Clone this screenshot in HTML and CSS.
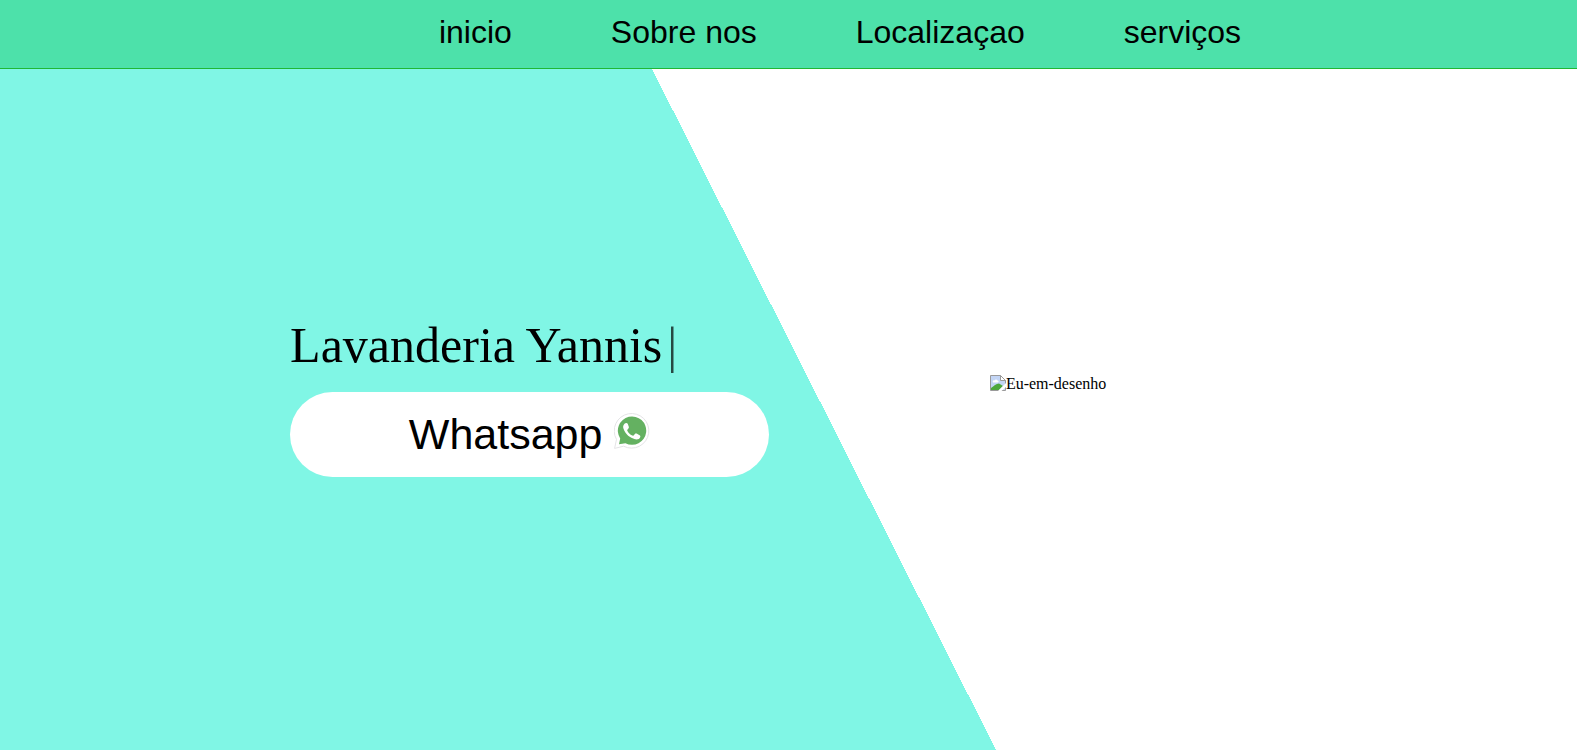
FILE: index.html
```html
<!DOCTYPE html>
<html lang="pt-BR">
<head>
<meta charset="utf-8">
<title>Lavanderia Yannis</title>
<link rel="stylesheet" href="styles.css">
</head>
<body>
<header class="header">
  <nav>
    <ul class="menu">
      <li><a href="#inicio">inicio</a></li>
      <li><a href="#sobre">Sobre nos</a></li>
      <li><a href="#localizacao">Localizaçao</a></li>
      <li><a href="#servicos">serviços</a></li>
    </ul>
  </nav>
</header>
<main class="hero" id="inicio">
  <div class="intro">
    <h1 class="title">Lavanderia Yannis<span class="cursor">|</span></h1>
    <button class="whatsapp" type="button">Whatsapp <svg class="whatsapp-icon" viewBox="0 0 36 36" aria-hidden="true">
      <path d="M.6 35.400 2.500 26.400A17.300 17.300 0 1 1 9.600 33.200z" fill="#fff" stroke="#e4e4e6" stroke-width="1"/>
      <path d="M5 31.200 6.200 25.500A14.200 14.200 0 1 1 11.400 30.200z" fill="#64b161"/>
      <path d="M10.500 10.700c-1.500 1.400-1.700 3.300-.9 5.400 2.100 5.400 6.300 8.900 11.500 10.200 2.400.5 4.700-.4 5.200-2.400.2-.9-.1-1.300-.7-1.700l-3-1.600c-.7-.3-1.200-.2-1.700.3l-1.300 1.500c-.4.4-.8.4-1.300.2-2.300-1.100-4-2.800-5-4.900-.2-.5-.1-.9.3-1.300l1-1.200c.3-.4.4-.8.200-1.400l-1-2.800c-.4-1.100-2-1.400-3.300-.3z" fill="#fff"/>
    </svg></button>
  </div>
  <div class="portrait">
    <svg class="broken-icon" viewBox="0 0 16 16" aria-hidden="true">
      <path d="M.5.500h10l5 5v10H.500z" fill="#c3d5f5"/>
      <path d="M3 7.500c-1-1.500.500-2.500 1.500-2 .5-1.500 2.500-1.500 3 0 1.500 0 1.500 2 0 2z" fill="#fff"/>
      <path d="M1 15v-2C4 11 6 8.500 9 8.500l4 2.500-4 4z" fill="#4ea83c"/>
      <path d="M10.500.500v5h5z" fill="#fff" stroke="#9a9a9a"/>
      <path d="M.5 15.500V.500h10l5 5v10z" fill="none" stroke="#9a9a9a"/>
      <path d="M16 8 8 16h3.500L16 12z" fill="#fff"/>
    </svg><span>Eu-em-desenho</span>
  </div>
</main>
</body>
</html>
```

FILE: styles.css
```css
* {
  box-sizing: border-box;
  margin: 0;
  padding: 0;
}

body {
  min-height: 100vh;
  display: flex;
  flex-direction: column;
  font-family: "Liberation Serif", "Times New Roman", serif;
  color: #000;
  background: #fff;
}

.header {
  padding: 14px 0 17px;
  background: #4de1aa;
  border-bottom: 1px solid #1fb834;
}

.menu {
  display: flex;
  justify-content: center;
  padding-left: 4px;
  list-style: none;
}

.menu li {
  margin-left: 99px;
}

.menu a {
  font: 32px/37px "Liberation Sans", Arial, sans-serif;
  color: #000;
  text-decoration: none;
}

.hero {
  flex: 1;
  display: flex;
  justify-content: center;
  align-items: center;
  gap: 14vw;
  padding-bottom: 26px;
  background: linear-gradient(63.2deg, #80f6e5 51.85%, #fff 51.85%);
}

.intro {
  display: flex;
  flex-direction: column;
  gap: 18px;
  width: 479px;
}

.title {
  font-size: 50px;
  line-height: 58px;
  font-weight: 400;
}

.cursor {
  margin-left: 5px;
  opacity: 0.7;
}

.whatsapp {
  padding: 18px 0;
  border: 0;
  border-radius: 50px;
  background: #fff;
  color: #000;
  font: 43px/49px "Liberation Sans", Arial, sans-serif;
  cursor: pointer;
}

.whatsapp-icon {
  width: 36px;
  height: 36px;
}

.portrait {
  display: flex;
  width: 297px;
  margin-bottom: 26px;
  font-size: 16px;
  line-height: 18px;
}

.broken-icon {
  width: 16px;
  height: 16px;
}
```
